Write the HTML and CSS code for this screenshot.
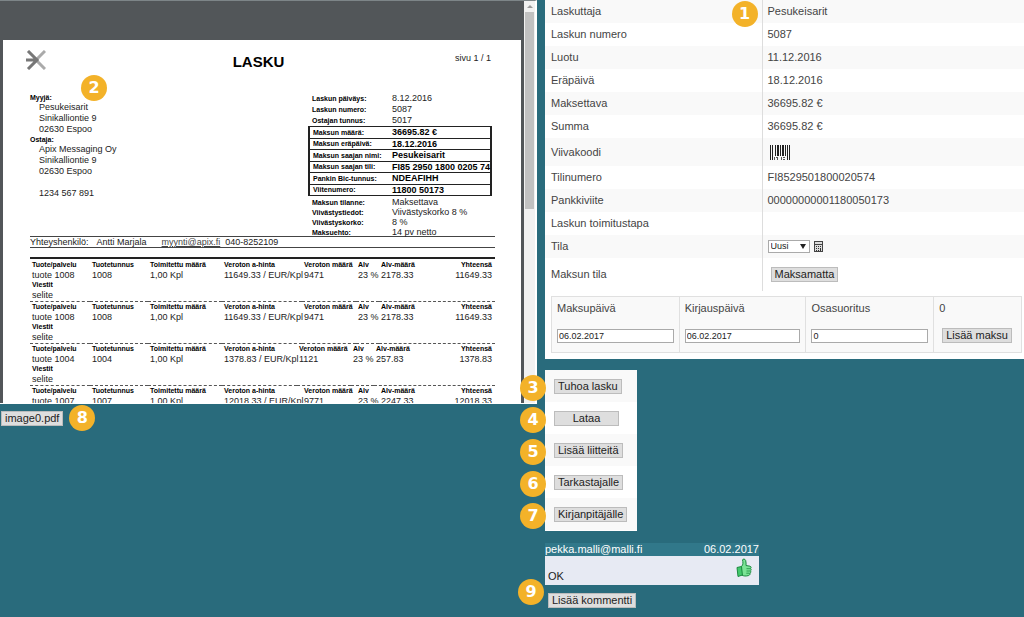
FILE: index.html
```html
<!DOCTYPE html>
<html lang="fi">
<head>
<meta charset="utf-8">
<title>Lasku 5087</title>
<link rel="stylesheet" href="styles.css">
</head>
<body>
<div class="layout">
  <section class="preview" aria-label="Laskun esikatselu">
    <div class="viewer">
      <div class="canvas">
        <article class="sheet">
          <header class="sheet-head">
            <svg class="logo" viewBox="0 0 20 20" aria-hidden="true">
              <path d="M19 1 11 9M11 11l8 8" stroke="#aaa" stroke-width="3" fill="none"/>
              <path d="M2 1l9 9-9 9M0 10h11" stroke="#777" stroke-width="3" fill="none"/>
            </svg>
            <h1>LASKU</h1>
            <span class="page-no">sivu 1 / 1</span>
          </header>
          <div class="parties">
            <div class="addresses">
              <b>Myyjä:</b>
              <p>Pesukeisarit<br>Sinikalliontie 9<br>02630 Espoo</p>
              <b>Ostaja:</b>
              <p>Apix Messaging Oy<br>Sinikalliontie 9<br>02630 Espoo<br><br>1234 567 891</p>
            </div>
            <div class="facts">
              <dl>
                <dt>Laskun päiväys:</dt><dd>8.12.2016</dd>
                <dt>Laskun numero:</dt><dd>5087</dd>
                <dt>Ostajan tunnus:</dt><dd>5017</dd>
              </dl>
              <table class="boxed">
                <tr><th scope="row">Maksun määrä:</th><td>36695.82 €</td></tr>
                <tr><th scope="row">Maksun eräpäivä:</th><td>18.12.2016</td></tr>
                <tr><th scope="row">Maksun saajan nimi:</th><td>Pesukeisarit</td></tr>
                <tr><th scope="row">Maksun saajan tili:</th><td>FI85 2950 1800 0205 74</td></tr>
                <tr><th scope="row">Pankin Bic-tunnus:</th><td>NDEAFIHH</td></tr>
                <tr><th scope="row">Viitenumero:</th><td>11800 50173</td></tr>
              </table>
              <dl class="terms">
                <dt>Maksun tilanne:</dt><dd>Maksettava</dd>
                <dt>Viivästystiedot:</dt><dd>Viivästyskorko 8 %</dd>
                <dt>Viivästyskorko:</dt><dd>8 %</dd>
                <dt>Maksuehto:</dt><dd>14 pv netto</dd>
              </dl>
            </div>
          </div>
          <div class="contact"><span>Yhteyshenkilö:</span><span class="person">Antti Marjala</span><a href="mailto:myynti@apix.fi">myynti@apix.fi</a><span>040-8252109</span></div>
          <div class="items">
            <table class="item">
              <colgroup><col class="c1"><col class="c2"><col class="c3"><col class="c4"><col class="c5"><col class="c6"><col></colgroup>
              <tr><th>Tuote/palvelu</th><th>Tuotetunnus</th><th>Toimitettu määrä</th><th>Veroton a-hinta</th><th>Veroton määrä</th><th>Alv</th><th class="sum"><span>Alv-määrä</span><span>Yhteensä</span></th></tr>
              <tr><td>tuote 1008</td><td>1008</td><td>1,00 Kpl</td><td>11649.33 / EUR/Kpl</td><td>9471</td><td>23 %</td><td class="sum"><span>2178.33</span><span>11649.33</span></td></tr>
              <tr><th>Viestit</th></tr>
              <tr class="note"><td>selite</td></tr>
            </table>
            <table class="item">
              <colgroup><col class="c1"><col class="c2"><col class="c3"><col class="c4"><col class="c5"><col class="c6"><col></colgroup>
              <tr><th>Tuote/palvelu</th><th>Tuotetunnus</th><th>Toimitettu määrä</th><th>Veroton a-hinta</th><th>Veroton määrä</th><th>Alv</th><th class="sum"><span>Alv-määrä</span><span>Yhteensä</span></th></tr>
              <tr><td>tuote 1008</td><td>1008</td><td>1,00 Kpl</td><td>11649.33 / EUR/Kpl</td><td>9471</td><td>23 %</td><td class="sum"><span>2178.33</span><span>11649.33</span></td></tr>
              <tr><th>Viestit</th></tr>
              <tr class="note"><td>selite</td></tr>
            </table>
            <table class="item">
              <colgroup><col class="c1"><col class="c2"><col class="c3"><col class="c4 narrow"><col class="c5"><col class="c6"><col></colgroup>
              <tr><th>Tuote/palvelu</th><th>Tuotetunnus</th><th>Toimitettu määrä</th><th>Veroton a-hinta</th><th>Veroton määrä</th><th>Alv</th><th class="sum"><span>Alv-määrä</span><span>Yhteensä</span></th></tr>
              <tr><td>tuote 1004</td><td>1004</td><td>1,00 Kpl</td><td>1378.83 / EUR/Kpl</td><td>1121</td><td>23 %</td><td class="sum"><span>257.83</span><span>1378.83</span></td></tr>
              <tr><th>Viestit</th></tr>
              <tr class="note"><td>selite</td></tr>
            </table>
            <table class="item">
              <colgroup><col class="c1"><col class="c2"><col class="c3"><col class="c4"><col class="c5"><col class="c6"><col></colgroup>
              <tr><th>Tuote/palvelu</th><th>Tuotetunnus</th><th>Toimitettu määrä</th><th>Veroton a-hinta</th><th>Veroton määrä</th><th>Alv</th><th class="sum"><span>Alv-määrä</span><span>Yhteensä</span></th></tr>
              <tr><td>tuote 1007</td><td>1007</td><td>1,00 Kpl</td><td>12018.33 / EUR/Kpl</td><td>9771</td><td>23 %</td><td class="sum"><span>2247.33</span><span>12018.33</span></td></tr>
            </table>
          </div>
          <span class="badge badge-sheet">2</span>
        </article>
      </div>
      <div class="scrollbar" aria-hidden="true"><i class="arrow"></i><i class="thumb"></i></div>
    </div>
    <div class="attachment"><button type="button" class="btn">image0.pdf</button><span class="badge">8</span></div>
  </section>

  <main class="side">
    <section class="details">
      <table class="props">
        <tr><th scope="row">Laskuttaja<span class="badge badge-props">1</span></th><td>Pesukeisarit</td></tr>
        <tr><th scope="row">Laskun numero</th><td>5087</td></tr>
        <tr><th scope="row">Luotu</th><td>11.12.2016</td></tr>
        <tr><th scope="row">Eräpäivä</th><td>18.12.2016</td></tr>
        <tr><th scope="row">Maksettava</th><td>36695.82 €</td></tr>
        <tr><th scope="row">Summa</th><td>36695.82 €</td></tr>
        <tr class="barcode-row"><th scope="row">Viivakoodi</th><td>
          <svg class="barcode" viewBox="0 0 20 15" role="img" aria-label="Viivakoodi">
            <path d="M0 0h1v15H0zM2 0h1v15H2zM5 0h1v11H5zM7 0h2v11H7zM10 0h1v11h-1zM12 0h2v11h-2zM15 0h1v11h-1zM17 0h1v15h-1zM19 0h1v15h-1z" fill="#222"/>
            <path d="M4 12h1v3H4zM6 12h2v1H6zM7 13h1v2H7zM11 12h1v3h-1zM13 12h2v1h-2zM13 14h2v1h-2z" fill="#555"/>
          </svg></td></tr>
        <tr><th scope="row">Tilinumero</th><td>FI8529501800020574</td></tr>
        <tr><th scope="row">Pankkiviite</th><td>00000000001180050173</td></tr>
        <tr><th scope="row">Laskun toimitustapa</th><td></td></tr>
        <tr><th scope="row"><label for="tila">Tila</label></th><td><div class="state">
          <span class="select"><select id="tila"><option>Uusi</option></select></span>
          <svg class="calc" viewBox="0 0 9 11" aria-hidden="true">
            <path d="M0 0h9v11H0z" fill="#444"/>
            <path d="M1 1h7v2H1zM1 4h7v6H1z" fill="#ddd"/>
            <path d="M2 5h1v1H2zM4 5h1v1H4zM6 5h1v1H6zM2 7h1v1H2zM4 7h1v1H4zM6 7h1v3H6zM2 9h1v1H2zM4 9h1v1H4z" fill="#333"/>
          </svg></div></td></tr>
        <tr class="paid-row"><th scope="row">Maksun tila</th><td><button type="button" class="btn indent">Maksamatta</button></td></tr>
      </table>
      <div class="payment">
        <div class="cell"><label for="maksu">Maksupäivä</label><input id="maksu" type="text" value="06.02.2017"></div>
        <div class="cell"><label for="kirjaus">Kirjauspäivä</label><input id="kirjaus" type="text" value="06.02.2017"></div>
        <div class="cell"><label for="osa">Osasuoritus</label><input id="osa" type="text" value="0"></div>
        <div class="cell"><span>0</span><button type="button" class="btn indent">Lisää maksu</button></div>
      </div>
    </section>

    <ul class="actions">
      <li><span class="badge">3</span><button type="button" class="btn">Tuhoa lasku</button></li>
      <li><span class="badge">4</span><button type="button" class="btn wide">Lataa</button></li>
      <li><span class="badge">5</span><button type="button" class="btn">Lisää liitteitä</button></li>
      <li><span class="badge">6</span><button type="button" class="btn">Tarkastajalle</button></li>
      <li><span class="badge">7</span><button type="button" class="btn">Kirjanpitäjälle</button></li>
    </ul>

    <article class="comment">
      <header><span>pekka.malli@malli.fi</span><time>06.02.2017</time></header>
      <div class="comment-body"><p>OK</p>
        <svg class="like" viewBox="0 0 16 20" aria-label="Hyväksytty" role="img">
          <path d="M5.500 8.500C7.500 6.500 7 4 6.500 2 7 .5 9 .8 9.700 2.500c.6 1.700.3 3.500.3 5l4 .7c1.500.5 1.300 2 .5 2.400 1 .7.8 1.900-.1 2.300.8.8.4 1.900-.5 2.200.5 1-.1 1.900-1.200 2.400-2.700.8-5 .7-7.200-.5z" fill="#7be495" stroke="#1c8a40" stroke-width="1"/>
          <path d="M1 9.500l4.500-1 .9 8.500-4.400 1.500z" fill="#42c96b" stroke="#1c8a40" stroke-width="1"/>
          <path d="M10.500 10.700h3.800M10.500 13h3.600M10.300 15.200h3.300" stroke="#1c8a40" stroke-width=".8"/>
        </svg>
      </div>
    </article>
    <div class="add-comment"><span class="badge">9</span><button type="button" class="btn">Lisää kommentti</button></div>
  </main>
</div>
</body>
</html>
```
FILE: styles.css
```css
* { box-sizing: border-box; }
body {
  margin: 0;
  background: #296b7c;
  color: #444;
  font: 11px/13px "Liberation Sans", Arial, sans-serif;
}
h1, p, dl, dd, ul { margin: 0; padding: 0; }
table { border-collapse: collapse; border-spacing: 0; }
th, td { padding: 0; text-align: left; }
svg { display: block; }

.layout {
  display: grid;
  grid-template-columns: 537fr 479fr;
  column-gap: 8px;
}
.btn {
  padding: 0 3px;
  border: 1px solid #bcbcbc;
  background: #dedede;
  color: #222;
  font: inherit;
  white-space: nowrap;
}
.btn.wide { width: 65px; }
.btn.indent { margin-left: 3px; }
.badge {
  display: block;
  width: 26px;
  height: 26px;
  border-radius: 50%;
  background: #f3b229;
  color: #fff;
  font: bold 16px/26px "DejaVu Sans", Verdana, sans-serif;
  text-align: center;
}

/* Document viewer */
.viewer {
  display: flex;
  height: 404px;
  overflow: hidden;
  border-top: 1px solid #7d8588;
  border-right: 2px solid #fff;
  border-bottom: 1px solid #fff;
}
.canvas {
  flex: 1;
  min-width: 0;
  padding: 39px 3px 0;
  background: #525659;
}
.scrollbar {
  display: flex;
  flex-direction: column;
  align-items: center;
  width: 11px;
  padding-top: 4px;
  background: #f1f1f1;
}
.arrow {
  border: 3px solid transparent;
  border-top: 0;
  border-bottom-color: #999;
}
.thumb {
  width: 9px;
  height: 197px;
  margin-top: 4px;
  background: #c1c1c1;
}
.sheet {
  position: relative;
  height: 440px;
  padding: 10px 26px 0 27px;
  background: #fff;
  color: #222;
  font-size: 9px;
  line-height: 11px;
}
.sheet-head {
  display: grid;
  grid-template-columns: 1fr auto 1fr;
  height: 43px;
  margin-left: -8px;
}
.sheet-head h1 {
  color: #000;
  font-size: 15px;
  line-height: 24px;
}
.logo {
  width: 20px;
  height: 20px;
  margin-left: 4px;
}
.page-no {
  padding: 3px 4px 0 0;
  text-align: right;
}
.parties {
  display: flex;
  justify-content: space-between;
  height: 143px;
}
.addresses b, .facts dt, .boxed th, .item th {
  color: #000;
  font-size: 7px;
  font-weight: bold;
}
.addresses b { display: block; line-height: 9px; }
.addresses p { padding-left: 9px; line-height: 11px; }
.facts { width: 187px; }
.facts dl {
  display: grid;
  grid-template-columns: 80px 1fr;
  grid-auto-rows: 11px;
  padding-left: 4px;
}
.facts .terms { grid-auto-rows: 10px; padding-top: 1px; }
.boxed {
  width: 184px;
  border: 2px solid #222;
  border-width: 1px 2px;
  white-space: nowrap;
}
.boxed tr { border-bottom: 1px solid #222; }
.boxed th { width: 83px; padding-left: 3px; line-height: 10px; }
.boxed td { color: #000; font-weight: bold; line-height: 10px; }
.boxed tr:nth-child(odd) td { line-height: 11px; }
.contact {
  display: flex;
  margin-bottom: 9px;
  border: 1px solid #444;
  border-width: 1px 0;
  line-height: 10px;
}
.contact .person { margin: 0 15px 0 8px; }
.contact a { margin-right: 5px; color: #444; }
.items { border-top: 2px solid #222; padding-top: 1px; }
.item {
  width: 100%;
  table-layout: fixed;
  border-bottom: 1px dashed #555;
  white-space: nowrap;
}
.item th, .item td { padding-left: 2px; line-height: 10px; }
.item .note td { line-height: 11px; }
.c1 { width: 60px; }
.c2 { width: 58px; }
.c3 { width: 74px; }
.c4 { width: 80px; }
.c4.narrow { width: 75px; }
.c5 { width: 54px; }
.c6 { width: 23px; }
.item .sum span:last-child { float: right; margin-right: 3px; }
.badge-sheet { position: absolute; left: 78px; top: 35px; }
.attachment {
  display: flex;
  align-items: center;
  gap: 6px;
  padding: 1px;
}

/* Invoice details */
.details { background: #fff; padding-bottom: 6px; }
.props { width: 100%; }
.props tr { height: 23px; }
.props tr:nth-child(odd) { background: #f9f9f9; }
.props .barcode-row { height: 28px; }
.props .paid-row { height: 33px; }
.props th {
  position: relative;
  width: 217px;
  padding-left: 6px;
  border-right: 1px solid #ddd;
  font-weight: normal;
}
.props td { padding-left: 5px; }
.badge-props { position: absolute; right: 4px; top: 1px; }
.barcode { width: 20px; height: 15px; margin-left: 2px; }
.state { display: flex; align-items: center; gap: 4px; }
.select { position: relative; }
.select::after {
  content: "";
  position: absolute;
  right: 4px;
  top: 4px;
  border: 3px solid transparent;
  border-top: 5px solid #222;
  border-bottom: 0;
}
.select select {
  appearance: none;
  display: block;
  width: 42px;
  height: 13px;
  padding: 0 2px;
  border: 1px solid #aaa;
  border-radius: 0;
  background: #fff;
  color: #222;
  font: 9px/11px "Liberation Sans", Arial, sans-serif;
}
.calc { width: 9px; height: 11px; }
.payment {
  display: grid;
  grid-template-columns: 127fr 127fr 128fr 88fr;
  margin: 5px 2px 0 6px;
  border: 1px solid #e0e0e0;
  background: #f9f9f9;
}
.cell {
  display: grid;
  gap: 13px;
  padding: 5px 5px 9px;
  justify-items: start;
}
.cell + .cell { border-left: 1px solid #e0e0e0; }
.cell input {
  width: 100%;
  height: 14px;
  padding: 0 1px;
  border: 1px solid #aaa;
  background: #fff;
  color: #222;
  font: 9px/12px "Liberation Sans", Arial, sans-serif;
}

/* Actions and comments */
.actions {
  width: 92px;
  margin-top: 11px;
  padding-bottom: 1px;
  background: #fff;
  list-style: none;
}
.actions li {
  position: relative;
  display: flex;
  align-items: center;
  height: 32px;
  padding-left: 9px;
}
.actions li:nth-child(odd) { background: #f9f9f9; }
.actions .badge { position: absolute; left: -25px; top: 5px; }
.comment { width: 214px; margin-top: 12px; color: #222; }
.comment header {
  display: flex;
  justify-content: space-between;
  background: #31788a;
  color: #fff;
}
.comment-body {
  display: flex;
  justify-content: space-between;
  height: 29px;
  padding: 2px 7px 2px 3px;
  background: #e7eaf3;
}
.comment-body p { align-self: flex-end; }
.like { width: 16px; height: 20px; }
.add-comment { position: relative; padding: 8px 3px; }
.add-comment .badge { position: absolute; left: -27px; top: -6px; }
```
